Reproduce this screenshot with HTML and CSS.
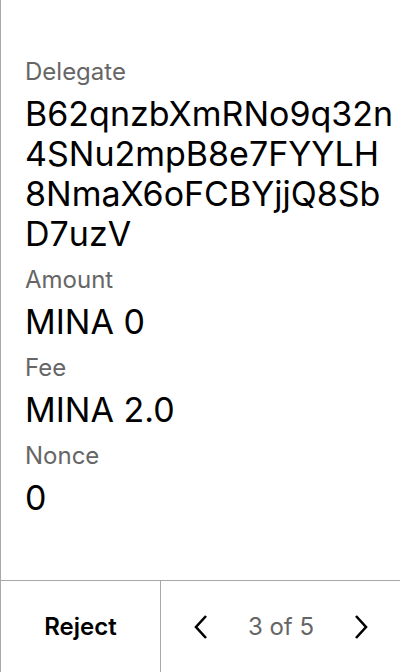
FILE: index.html
```html
<!DOCTYPE html>
<html>
<head>
<meta charset="utf-8">
<link rel="stylesheet" href="styles.css">
</head>
<body>
<div class="screen">
  <div class="content">
    <div class="field">
      <div class="label">Delegate</div>
      <div class="value">B62qnzbXmRNo9q32n<br>4SNu2mpB8e7FYYLH<br>8NmaX6oFCBYjjQ8Sb<br>D7uzV</div>
    </div>
    <div class="field">
      <div class="label">Amount</div>
      <div class="value">MINA 0</div>
    </div>
    <div class="field">
      <div class="label">Fee</div>
      <div class="value">MINA 2.0</div>
    </div>
    <div class="field">
      <div class="label">Nonce</div>
      <div class="value">0</div>
    </div>
  </div>
  <div class="footer">
    <div class="reject">Reject</div>
    <div class="pager">
      <svg class="chev" width="16" height="26" viewBox="0 0 16 26"><path d="M13 2 L3 13 L13 24" fill="none" stroke="#000" stroke-width="2.6"/></svg>
      <span class="count">3 of 5</span>
      <svg class="chev" width="16" height="26" viewBox="0 0 16 26"><path d="M3 2 L13 13 L3 24" fill="none" stroke="#000" stroke-width="2.6"/></svg>
    </div>
  </div>
</div>
</body>
</html>
```
FILE: styles.css
```css
html, body { margin: 0; padding: 0; background: #fff; }
body { font-family: Inter, "Noto Sans", sans-serif; }
.screen {
  width: 400px; height: 672px; box-sizing: border-box;
  border-left: 1px solid #a8a8a8;
  display: flex; flex-direction: column;
}
.content { flex: 1; padding: 56px 0 0 24px; display: flex; flex-direction: column; gap: 10px; }
.field { display: flex; flex-direction: column; }
.label { font-size: 24px; line-height: 32px; color: #666; }
.value { font-size: 34px; line-height: 40px; color: #000; margin-top: 6px; white-space: nowrap; }
.footer { height: 91px; border-top: 1px solid #a8a8a8; display: flex; }
.reject { width: 159px; border-right: 1px solid #a8a8a8; display: flex; align-items: center; justify-content: center; font-weight: 600; font-size: 24px; color: #000; }
.pager { flex: 1; display: flex; align-items: center; justify-content: space-between; padding: 0 31px 0 32px; }
.count { font-size: 24px; color: #666; }
.chev { display: block; }
```
